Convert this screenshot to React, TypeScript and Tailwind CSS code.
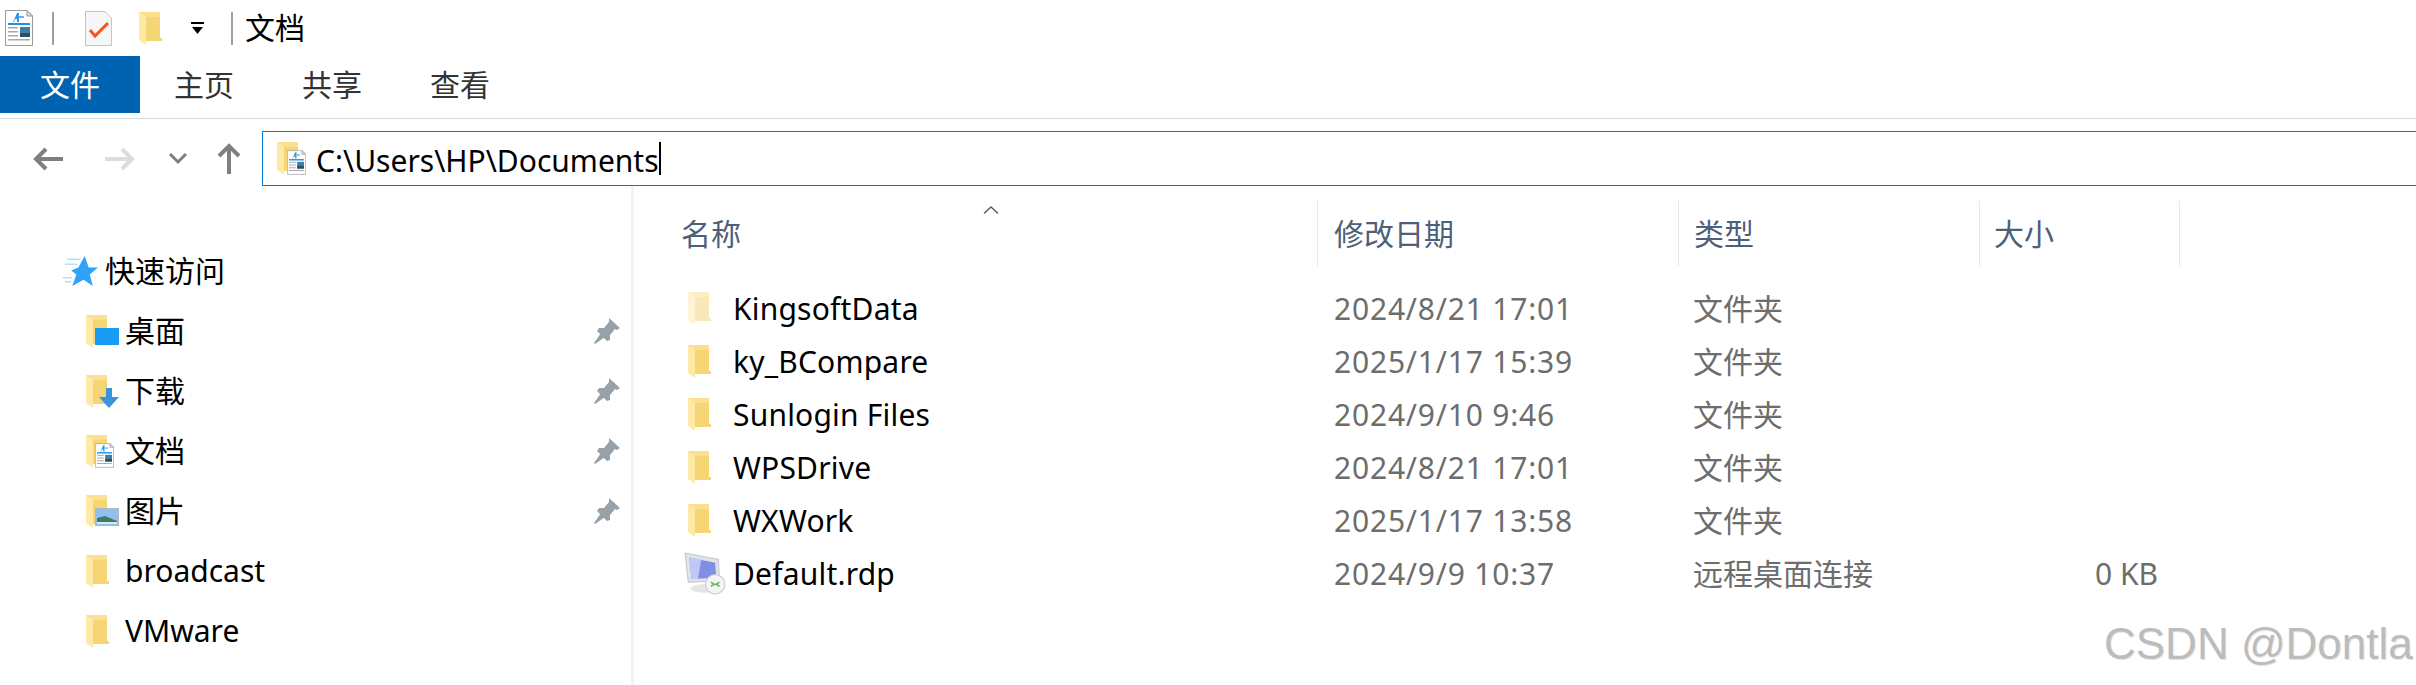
import type { ReactNode } from "react";

function Folder({ className = "", pale = false }: { className?: string; pale?: boolean }) {
  return (
    <svg viewBox="0 0 23 33" className={`${className} ${pale ? "opacity-50" : ""}`}>
      <path d="M0 0 H21 V26 H23 V29 H7 V5 Z" fill="#f6d777" />
      <path d="M7 5 H21 V26 H23 V29 H7 Z" fill="#f5d574" />
      <path d="M0 0 L7 5 V33 L0 28 Z" fill="#fee9a6" />
      <path d="M0 0 H21 V5 H7 Z" fill="#fbe08f" />
    </svg>
  );
}

function DocThumb({ className = "" }: { className?: string }) {
  return (
    <svg viewBox="0 0 28 36" className={className}>
      <path d="M.5.5 H22 L27.5 6 V35.5 H.5 Z" fill="#fff" stroke="#9a9a9a" />
      <path d="M22 .5 V6 H27.5 Z" fill="#ddd" stroke="#9a9a9a" />
      <path d="M8 12 L12 3 H14 V12 H12 V9 H10 L9 12 Z" fill="#2b9be8" />
      <rect x="14" y="6" width="5" height="2" fill="#62b6ee" />
      <rect x="3" y="13" width="22" height="2" fill="#1f8fe0" />
      <rect x="3" y="17" width="10" height="1.5" fill="#aaa" />
      <rect x="3" y="21" width="10" height="1.5" fill="#aaa" />
      <rect x="3" y="25" width="10" height="1.5" fill="#aaa" />
      <rect x="3" y="29" width="22" height="1.5" fill="#aaa" />
      <rect x="15" y="17" width="10" height="10" fill="#3f7ea6" />
      <rect x="15" y="23" width="10" height="4" fill="#2f4f5f" />
    </svg>
  );
}

function FolderDoc({ className = "" }: { className?: string }) {
  return (
    <span className={`relative block ${className}`}>
      <Folder className="absolute left-0 top-0 h-[33px] w-[23px]" />
      <DocThumb className="absolute bottom-0 right-0 h-[25px] w-[19px]" />
    </span>
  );
}

function Pin() {
  return (
    <svg viewBox="0 0 26 26" className="h-[26px] w-[26px]">
      <path d="M15 0 L26 10 L23 12 L21 11 L16 17 L16 22 L13 23 L3 13 L5 10 L10 10 L15 4 Z" fill="#98a1a7" />
      <path d="M7 15 L11 19 L1 26 L0 25 Z" fill="#98a1a7" />
    </svg>
  );
}

function NavRow({ icon, label, pinned }: { icon: ReactNode; label: string; pinned?: boolean }) {
  return (
    <div className="flex h-[60px] items-center pl-[86px] pr-[11px]">
      <span className="flex w-[39px] shrink-0">{icon}</span>
      <span className="flex-1 text-[30px] leading-none text-black">{label}</span>
      {pinned && <Pin />}
    </div>
  );
}

const navFolder = <Folder className="h-[33px] w-[23px]" />;

const files = [
  { name: "KingsoftData", date: "2024/8/21 17:01", type: "文件夹", size: "", pale: true },
  { name: "ky_BCompare", date: "2025/1/17 15:39", type: "文件夹", size: "" },
  { name: "Sunlogin Files", date: "2024/9/10 9:46", type: "文件夹", size: "" },
  { name: "WPSDrive", date: "2024/8/21 17:01", type: "文件夹", size: "" },
  { name: "WXWork", date: "2025/1/17 13:58", type: "文件夹", size: "" },
  { name: "Default.rdp", date: "2024/9/9 10:37", type: "远程桌面连接", size: "0 KB", rdp: true },
];

function RdpIcon() {
  return (
    <svg viewBox="0 0 40 40" className="h-[43px] w-[43px]">
      <path d="M1 1 L32 7 L33 27 L4 28 Z" fill="#dfe3ea" stroke="#c4c8d0" />
      <path d="M5 5 L29 10 L30 24 L7 25 Z" fill="#7f8fe8" />
      <path d="M5 5 L16 7 L13 25 L7 25 Z" fill="#c0c8f5" />
      <ellipse cx="19" cy="34" rx="13" ry="4" fill="#e6e6e6" />
      <circle cx="29" cy="30" r="9" fill="#f4f4f4" stroke="#c8c8c8" />
      <path d="M25 28 L28 30 L25 32 M33 28 L30 30 L33 32" fill="none" stroke="#62b85c" strokeWidth="1.6" />
    </svg>
  );
}

export default function App() {
  return (
    <div className="relative h-[685px] w-[2416px] overflow-hidden bg-white font-['Noto_Sans','Noto_Sans_CJK_SC',sans-serif]">
      {/* title bar */}
      <div className="flex h-[56px] items-center pl-[5px]">
        <DocThumb className="h-[36px] w-[28px]" />
        <span className="ml-[19px] h-[33px] w-[2px] bg-[#a0a0a0]" />
        <svg viewBox="0 0 27 35" className="ml-[31px] h-[35px] w-[27px]">
          <path d="M.5.5 H20 L26.5 7 V34.5 H.5 Z" fill="#f5f6f8" stroke="#c4c4c4" />
          <path d="M5 19 L10 25 L23 12" fill="none" stroke="#f0561d" strokeWidth="3" />
        </svg>
        <Folder className="ml-[27px] h-[33px] w-[23px]" />
        <svg viewBox="0 0 13 13" className="ml-[29px] h-[13px] w-[13px]">
          <rect width="13" height="2" fill="#000" />
          <path d="M1 5 H12 L6.500 12 Z" fill="#000" />
        </svg>
        <span className="ml-[27px] h-[33px] w-[2px] bg-[#a0a0a0]" />
        <span className="ml-[12px] text-[30px] leading-none text-black">文档</span>
      </div>

      {/* ribbon tabs */}
      <div className="flex h-[57px] items-center text-[30px] leading-none text-[#333]">
        <div className="flex h-full w-[140px] items-center justify-center bg-[#0063b1] text-white">文件</div>
        <div className="ml-[34px] flex gap-[68px]">
          <span>主页</span>
          <span>共享</span>
          <span>查看</span>
        </div>
      </div>
      <div className="mt-[5px] h-[1px] bg-[#dadbdc]" />

      {/* address row */}
      <div className="mt-[12px] flex h-[55px] items-center">
        <div className="flex w-[262px] items-center pl-[32px]">
          <svg viewBox="0 0 32 26" className="h-[26px] w-[32px]">
            <path d="M31 13 H4 M14 3 L4 13 L14 23" fill="none" stroke="#7f7f7f" strokeWidth="4" />
          </svg>
          <svg viewBox="0 0 32 26" className="ml-[40px] h-[26px] w-[32px]">
            <path d="M1 13 H28 M18 3 L28 13 L18 23" fill="none" stroke="#dcdcdc" strokeWidth="4" />
          </svg>
          <svg viewBox="0 0 18 12" className="ml-[33px] h-[12px] w-[18px]">
            <path d="M1 1 L9 9 L17 1" fill="none" stroke="#7f7f7f" strokeWidth="3" />
          </svg>
          <svg viewBox="0 0 24 31" className="ml-[30px] h-[31px] w-[24px]">
            <path d="M12 31 V3 M2 13 L12 3 L22 13" fill="none" stroke="#7f7f7f" strokeWidth="4" />
          </svg>
        </div>
        <div className="flex h-full flex-1 items-center border border-r-0 border-[#0078d7] pl-[14px]">
          <FolderDoc className="h-[33px] w-[29px]" />
          <span className="ml-[10px] translate-y-[2px] text-[30px] leading-none text-black">C:\Users\HP\Documents</span>
          <span className="h-[33px] w-[2px] bg-black" />
        </div>
      </div>

      {/* body */}
      <div className="flex h-[499px]">
        <aside className="w-[634px] shrink-0 border-r-[3px] border-[#f3f3f3] pt-[55px]">
          <div className="flex h-[60px] items-center pl-[63px]">
            <svg viewBox="0 0 34 30" className="h-[31px] w-[35px]">
              <path d="M21 0 L25 11 L34 11 L26 18 L29 29 L20 23 L9 29 L13 18 L8 14 L15 11 Z" fill="#2ea3f8" />
              <path d="M4 3 H17 M2 8 H14 M0 21 H9 M2 25 H8" stroke="#b5defa" strokeWidth="1.500" />
            </svg>
            <span className="ml-[7px] text-[30px] leading-none text-black">快速访问</span>
          </div>
          <NavRow
            pinned
            label="桌面"
            icon={
              <span className="relative block h-[33px] w-[33px]">
                {navFolder}
                <span className="absolute bottom-[3px] right-0 h-[17px] w-[24px] bg-[#1a9cf5]" />
              </span>
            }
          />
          <NavRow
            pinned
            label="下载"
            icon={
              <span className="relative block h-[33px] w-[33px]">
                {navFolder}
                <svg viewBox="0 0 20 20" className="absolute bottom-0 right-0 h-[20px] w-[20px]">
                  <path d="M7 0 H13 V9 H20 L10 20 L0 9 H7 Z" fill="#3b93e0" />
                </svg>
              </span>
            }
          />
          <NavRow
            pinned
            label="文档"
            icon={
              <span className="relative block h-[33px] w-[33px]">
                {navFolder}
                <DocThumb className="absolute bottom-0 right-[5px] h-[25px] w-[19px]" />
              </span>
            }
          />
          <NavRow
            pinned
            label="图片"
            icon={
              <span className="relative block h-[33px] w-[33px]">
                {navFolder}
                <svg viewBox="0 0 24 18" className="absolute bottom-[2px] right-0 h-[18px] w-[24px]">
                  <rect x=".5" y=".5" width="23" height="17" fill="#8fc0ee" stroke="#b0b8c4" />
                  <path d="M2 10 L10 8 L22 13 V16 H2 Z" fill="#3f7a66" />
                  <path d="M2 14 H22 V16 H2 Z" fill="#dfe8e4" />
                </svg>
              </span>
            }
          />
          <NavRow label="broadcast" icon={navFolder} />
          <NavRow label="VMware" icon={navFolder} />
        </aside>

        <main className="relative flex-1 pt-[15px]">
          <div className="grid h-[65px] grid-cols-[684px_361px_301px_200px] text-[30px] leading-none text-[#4c607a]">
            <div className="flex items-center border-r border-[#e8e8e8] pl-[47px]">名称</div>
            <div className="flex items-center border-r border-[#e8e8e8] pl-[16px]">修改日期</div>
            <div className="flex items-center border-r border-[#e8e8e8] pl-[15px]">类型</div>
            <div className="flex items-center border-r border-[#e8e8e8] pl-[14px]">大小</div>
          </div>
          <svg viewBox="0 0 16 8" className="absolute left-[349px] top-[20px] h-[8px] w-[16px]">
            <path d="M1 7.500 L8 1 L15 7.500" fill="none" stroke="#555" strokeWidth="1.300" />
          </svg>

          <div className="mt-[16px]">
            {files.map((f) => (
              <div
                key={f.name}
                className="grid h-[53px] grid-cols-[684px_361px_301px_200px] items-center text-[30px] leading-none text-[#6d6d6d]"
              >
                <div className="flex items-center pl-[50px] tracking-[0.2px] text-black">
                  <span className={`flex w-[49px] shrink-0 items-center ${f.rdp ? "" : "pl-[4px]"}`}>
                    {f.rdp ? <RdpIcon /> : <Folder pale={f.pale} className="h-[33px] w-[23px]" />}
                  </span>
                  {f.name}
                </div>
                <div className="pl-[16px] tracking-[0.8px]">{f.date}</div>
                <div className="pl-[14px]">{f.type}</div>
                <div className="pr-[22px] text-right">{f.size}</div>
              </div>
            ))}
          </div>
        </main>
      </div>

      <div className="absolute left-[2104px] top-[622px] whitespace-nowrap font-['Liberation_Sans',sans-serif] text-[44px] leading-none text-[#bcbcbc] [text-shadow:1px_1px_1px_#e4e4e4]">
        CSDN @Dontla
      </div>
    </div>
  );
}
